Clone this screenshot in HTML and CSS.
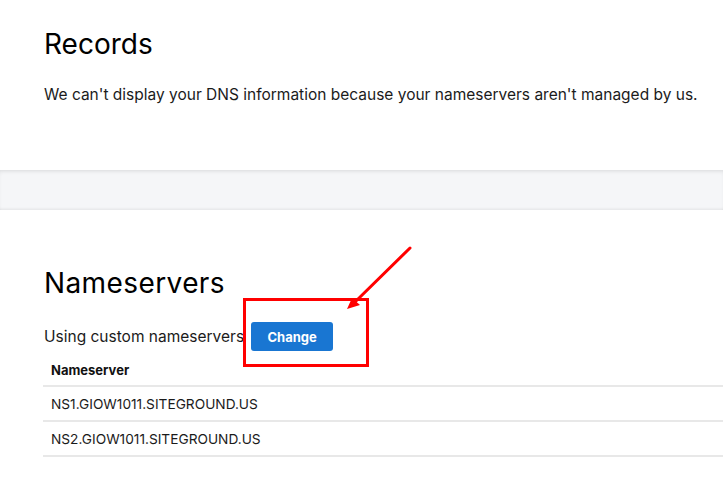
FILE: index.html
```html
<!DOCTYPE html>
<html lang="en">
<head>
    <meta charset="UTF-8">
    <meta name="viewport" content="width=device-width, initial-scale=1.0">
    <title>DNS Management</title>
    <link rel="stylesheet" href="styles.css">
</head>
<body>
    <section class="card records">
        <h2 class="card-title">Records</h2>
        <p class="card-text">We can't display your DNS information because your nameservers aren't managed by us.</p>
    </section>

    <div class="divider"></div>

    <section class="card nameservers">
        <h2 class="card-title">Nameservers</h2>
        <div class="ns-status">
            <span class="card-text">Using custom nameservers</span>
            <button class="btn-change">Change</button>
        </div>

        <table class="ns-table">
            <thead>
                <tr><th>Nameserver</th></tr>
            </thead>
            <tbody>
                <tr><td>NS1.GIOW1011.SITEGROUND.US</td></tr>
                <tr><td>NS2.GIOW1011.SITEGROUND.US</td></tr>
            </tbody>
        </table>

        <!-- annotation overlay -->
        <div class="highlight-box"></div>
        <svg class="highlight-arrow" width="80" height="80" viewBox="0 0 80 80">
            <line x1="74" y1="4" x2="19" y2="58" stroke="#ff0000" stroke-width="3" stroke-linecap="round"/>
            <polygon points="11,65 16,54 24,61" fill="#ff0000"/>
        </svg>
    </section>
</body>
</html>
```

FILE: styles.css
```css
body {
    margin: 0;
    font-family: Inter, 'Noto Sans', sans-serif;
    color: #111;
    background: #fff;
}

.card {
    padding: 0 0 0 44px;
}

.records {
    height: 170px;
    box-sizing: border-box;
    padding-top: 26px;
}

.card-title {
    font-size: 28px;
    font-weight: 400;
    line-height: 36px;
    margin: 0;
    color: #000;
}

.nameservers .card-title {
    letter-spacing: 0.4px;
}

.card-text {
    font-size: 15.5px;
    line-height: 24px;
    color: #1b1b1b;
}

.records .card-text {
    margin: 21px 0 0;
}

.divider {
    height: 40px;
    background: #f5f6f8;
    box-shadow: inset 0 3px 4px -2px rgba(0,0,0,0.12), inset 0 -3px 3px -2px rgba(0,0,0,0.08);
}

.nameservers {
    position: relative;
    padding-top: 55px;
    padding-left: 43px;
}

.nameservers .card-title {
    padding-left: 1px;
}

.ns-status {
    display: flex;
    align-items: center;
    margin-top: 21px;
    padding-left: 1px;
}

.btn-change {
    margin-left: 7px;
    width: 82px;
    height: 29px;
    background: #1976d2;
    color: #fff;
    font-family: inherit;
    font-size: 13px;
    font-weight: 700;
    border: none;
    border-radius: 3px;
}

.ns-table {
    width: 100%;
    border-collapse: collapse;
    margin-top: 4px;
}

.ns-table th,
.ns-table td {
    text-align: left;
    padding: 0 8px;
    border-bottom: 2px solid #e8e8e8;
}

.ns-table th {
    font-size: 13px;
    font-weight: 700;
    height: 30px;
}

.ns-table td {
    font-size: 13.7px;
    height: 33px;
    color: #1b1b1b;
}

.highlight-box {
    position: absolute;
    left: 243px;
    top: 88px;
    width: 120px;
    height: 63px;
    border: 3px solid #ff0000;
}

.highlight-arrow {
    position: absolute;
    left: 336px;
    top: 34px;
}
```
